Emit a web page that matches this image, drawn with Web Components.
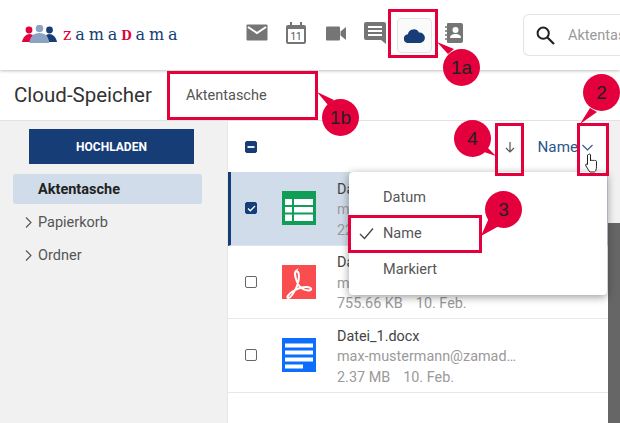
<!DOCTYPE html>
<html lang="de"><head><meta charset="utf-8"><title>Cloud-Speicher</title>
<style>html,body{margin:0;padding:0;width:620px;height:423px;overflow:hidden;background:#fff;font-family:Roboto,"Liberation Sans",sans-serif}</style>
</head><body>
<zd-app></zd-app>
<script>
const def=(name,css,html)=>customElements.define(name,class extends HTMLElement{
  constructor(){super();const r=this.attachShadow({mode:'open'});r.innerHTML=`<style>${css}</style>${typeof html==='function'?html(this):html}`;}
});
const ICONS={
 mail:'<svg width="22" height="18" viewBox="0 0 22 18"><rect x="0.5" y="0.5" width="21" height="16" rx="1" fill="#757575"/><path d="M2 3l9 6 9-6" fill="none" stroke="#fff" stroke-width="2"/></svg>',
 cal:'<svg width="20" height="22" viewBox="0 0 20 22"><path d="M4 0h2v3h8V0h2v3h2a2 2 0 0 1 2 2v15a2 2 0 0 1-2 2H2a2 2 0 0 1-2-2V5a2 2 0 0 1 2-2h2z" fill="#757575"/><rect x="2" y="7" width="16" height="13" fill="#fff"/><text x="10" y="18" text-anchor="middle" font-family="Roboto,sans-serif" font-size="10" fill="#555">11</text></svg>',
 video:'<svg width="20" height="15" viewBox="0 0 20 15"><rect x="0" y="0.5" width="14" height="14" rx="1" fill="#757575"/><path d="M14.500 5.500L20 1v13l-5.500-4.500z" fill="#757575"/></svg>',
 chat:'<svg width="22" height="22" viewBox="0 0 22 22"><path d="M2 0h18a2 2 0 0 1 2 2v20l-5-4H2a2 2 0 0 1-2-2V2a2 2 0 0 1 2-2z" fill="#757575"/><path d="M4 5h14M4 9h14M4 13h14" stroke="#fff" stroke-width="2"/></svg>',
 cloud:'<svg width="21" height="15" viewBox="0 0 21 15"><path d="M4.500 15a4.400 4.400 0 0 1-.7-8.800A6 6 0 0 1 15 4.600a5.200 5.200 0 0 1 1.300 10.400z" fill="#163d76"/></svg>',
 book:'<svg width="18" height="20" viewBox="0 0 18 20"><path d="M3 0h13a2 2 0 0 1 2 2v16a2 2 0 0 1-2 2H3a1 1 0 0 1-1-1V1a1 1 0 0 1 1-1z" fill="#757575"/><path d="M0 4h4M0 8h4M0 12h4M0 16h4" stroke="#757575" stroke-width="1.500"/><circle cx="10.500" cy="7" r="3" fill="#fff"/><path d="M5 15c0-3 2.500-4 5.500-4s5.500 1 5.500 4z" fill="#fff"/></svg>',
 search:'<svg width="19" height="19" viewBox="0 0 19 19"><circle cx="7.200" cy="7.200" r="5.600" fill="none" stroke="#222" stroke-width="2"/><path d="M11.500 11.500L18 18" stroke="#222" stroke-width="2.200"/></svg>',
 sheet:'<svg width="34" height="34" viewBox="0 0 34 34"><rect width="34" height="34" fill="#0f9d58"/><rect x="3" y="8" width="28" height="22" fill="#fff"/><path d="M3 15h28M3 22.500h28" stroke="#0f9d58" stroke-width="2"/><path d="M11 8v22" stroke="#0f9d58" stroke-width="2"/></svg>',
 pdf:'<svg width="34" height="34" viewBox="0 0 34 34"><rect width="34" height="34" fill="#f94d4f"/><path d="M14 6c-1.500 1-1 6 1 11s6 8 11 8.500c3 .3 4-1.500 2.500-2.500-3-2-11-1-18 3.500-5 3.500-6 6-4.500 6.500 2 .5 6-4.500 9-12 1.500-4 2.500-9 1.500-13-.4-1.600-2-2-3-1z" fill="none" stroke="#fff" stroke-width="2"/></svg>',
 doc:'<svg width="34" height="34" viewBox="0 0 34 34"><rect width="34" height="34" fill="#0d6efd"/><path d="M3 7.500h28M3 14.500h28M3 21.500h28" stroke="#fff" stroke-width="4"/><path d="M3 28.500h18" stroke="#fff" stroke-width="4"/></svg>',
 chev:'<svg width="7" height="11" viewBox="0 0 7 11"><path d="M1 .5l5 5-5 5" fill="none" stroke="#555" stroke-width="1.100"/></svg>',
};
def('zd-icon',':host{display:inline-flex;align-items:center;justify-content:center;line-height:0}',h=>ICONS[h.getAttribute('name')]);
def('zd-logo',`:host{display:flex;align-items:center;gap:6px;width:215px;flex:none}
 span{font:16px "DejaVu Serif",serif;letter-spacing:3.900px;color:#163d76;line-height:1}i{font-style:normal;color:#e4003c}b{font-weight:700;color:#e4003c;font-size:12px}`,
 `<svg width="35" height="20" viewBox="0 0 35 20"><circle cx="7" cy="5" r="3.400" fill="#e4003c"/><circle cx="27.500" cy="5" r="3.400" fill="#163d76"/><path d="M0 17c1-5 4-8 8-8l3 1-3 7z" fill="#e4003c"/><path d="M35 17c-1-5-4-8-8-8l-3 1 3 7z" fill="#163d76"/><circle cx="17.500" cy="3.500" r="3.800" fill="#8da3c4"/><path d="M7.500 18c0-6 4-10 10-10s9.500 4 9.500 10z" fill="#8da3c4"/></svg><span><i>z</i>ama<b>D</b>ama</span>`);
def('zd-nav',`:host{display:flex;flex:none;width:286px;align-items:center}
 ::slotted(*){width:39.500px;height:34px;flex:none}`,'<slot></slot>');
def('zd-navitem',`:host{display:flex;align-items:center;justify-content:center}
 :host([on]) div{border:1px solid #e3e3e3;background:#fafafa;border-radius:4px;width:33px;height:33px;display:flex;align-items:center;justify-content:center}`,'<div><slot></slot></div>');
def('zd-search',`:host{display:flex;align-items:center;flex:none;width:140px;height:42px;box-sizing:border-box;border:1px solid #e4e4e4;border-right:0;border-radius:6px 0 0 6px;padding-left:12px;gap:13px;color:#9a9a9a;font-size:14.500px;overflow:hidden;white-space:nowrap}`,'<zd-icon name="search"></zd-icon><span>Aktentasche</span>');
def('zd-header',`:host{display:flex;align-items:center;height:70px;padding-left:22px;box-sizing:border-box;background:#fff;position:relative;z-index:2;box-shadow:0 1px 3px rgba(0,0,0,.25)}`,'<slot></slot>');
def('zd-subhead',`:host{display:flex;align-items:center;height:51px;box-sizing:border-box;border-bottom:1px solid #e2e2e2;background:#fff;color:#3a3a3a;white-space:nowrap}
 h1{font:400 20.500px Roboto,sans-serif;color:#333;margin:0 0 0 14px;width:172px;flex:none}
 span{font-size:14.500px;color:#555;padding-top:1px}`,'<h1>Cloud-Speicher</h1><span>Aktentasche</span>');
def('zd-sidebar',`:host{display:flex;flex-direction:column;width:228px;flex:none;box-sizing:border-box;background:#f1f1f1;border-right:1px solid #e6e6e6;padding:8px 25px 0 13px;font-size:14.500px;color:#555}
 button{all:unset;display:flex;align-items:center;justify-content:center;box-sizing:border-box;margin-left:16px;width:165px;height:35px;background:#163d76;color:#fff;font:700 12px Roboto,sans-serif}
 .a{margin-top:10px;height:30px;background:#d1dcea;border-radius:2px;display:flex;align-items:center;padding-left:25px;font-weight:700;color:#222}
 .i{display:flex;align-items:center;height:33px;padding-left:12px;gap:6px}
 .a + .i{margin-top:2px}`,
 `<button>HOCHLADEN</button><div class="a">Aktentasche</div><div class="i"><zd-icon name="chev"></zd-icon>Papierkorb</div><div class="i"><zd-icon name="chev"></zd-icon>Ordner</div>`);
def('zd-check',`:host{display:inline-flex;width:12px;height:12px;box-sizing:border-box;border-radius:2px;border:1.500px solid #666;flex:none;align-items:center;justify-content:center;background:#fff}
 :host([state]){background:#163d76;border-color:#163d76}`,h=>{const s=h.getAttribute('state');
 return s==='on'?'<svg width="9" height="9" viewBox="0 0 9 9"><path d="M1 4.500l2.300 2.300L8 2" fill="none" stroke="#fff" stroke-width="1.300"/></svg>':s==='mixed'?'<svg width="8" height="8" viewBox="0 0 8 8"><path d="M0.500 4h7" stroke="#fff" stroke-width="1.800"/></svg>':''});
def('zd-toolbar',`:host{display:flex;align-items:center;height:51px;flex:none;padding-left:17px;box-sizing:border-box;font-size:15.200px;color:#2a5590}
 .s{flex:1}.ar{margin-right:22px;line-height:0}.n{margin-right:4px}.c{margin-right:15px;line-height:0;padding-top:2px}`,
 `<zd-check state="mixed"></zd-check><div class="s"></div><div class="ar"><svg width="12" height="12" viewBox="0 0 12 12"><path d="M6 1v10M2 7l4 4 4-4" fill="none" stroke="#555" stroke-width="1.200"/></svg></div><span class="n">Name</span><div class="c"><svg width="11" height="7" viewBox="0 0 11 7"><path d="M.5 1l5 5 5-5" fill="none" stroke="#2a5590" stroke-width="1.100"/></svg></div>`);
def('zd-row',`:host{display:flex;align-items:center;height:73.500px;box-sizing:border-box;border-bottom:1.500px solid #e8e8e8;padding-left:17px;flex:none;background:#fff}
 :host([sel]){background:#d1dcea;border-left:3px solid #163d76;padding-left:14px;border-bottom-color:#dfe5ee}
 .ic{margin-left:25px;margin-right:21px;line-height:0}
 .t{display:flex;flex-direction:column;gap:2px;padding-top:4px;font-size:14.400px;line-height:18.500px;color:#9a9a9a;white-space:nowrap}
 .t b{font-weight:400;color:#444}
 .m{display:flex;gap:13px}`,h=>{
 const g=a=>h.getAttribute(a)||'';
 return `<zd-check ${g('state')?`state="${g('state')}"`:''}></zd-check><div class="ic"><zd-icon name="${g('icon')}"></zd-icon></div><div class="t"><b>${g('title')}</b><span>max-mustermann@zamad…</span><div class="m"><span>${g('size')}</span><span>10. Feb.</span></div></div>`});
def('zd-scroll',`:host{display:block;width:12px;flex:none;background:#f1f1f1;overflow:hidden}
 div{margin-top:102px;height:300px;background:#666}`,'<div></div>');
def('zd-menu',`:host{position:absolute;left:349px;top:172px;z-index:3;width:258px;height:123px;box-sizing:border-box;padding:7px 0;background:#fff;border-radius:4px;box-shadow:0 2px 9px rgba(0,0,0,.4);font-size:14.500px;color:#555}
 div{display:flex;align-items:center;height:36px;padding-left:34px;position:relative}
 svg{position:absolute;left:10px;top:12px}`,
 `<div>Datum</div><div><svg width="16" height="13" viewBox="0 0 16 13"><path d="M1 7l4.500 4.500L14 1.500" fill="none" stroke="#444" stroke-width="1.300"/></svg>Name</div><div>Markiert</div>`);
def('zd-mark',`:host{position:absolute;z-index:5;box-sizing:border-box;border:3px solid #e4003c}`,'');
def('zd-bubble',`:host{position:absolute;z-index:6;width:37px;height:37px;border-radius:50%;background:#e4003c;color:#222;font:400 19px/37px "Liberation Sans",Arial,sans-serif;text-align:center}`,'<slot></slot>');
def('zd-app',`:host{display:block;position:relative;width:620px;height:423px;overflow:hidden;background:#fff}
 .body{display:flex;height:302px}
 .main{flex:1;display:flex;flex-direction:column;min-width:0;overflow:hidden}
 .tails{position:absolute;left:0;top:0;z-index:5;pointer-events:none}
 .hand{position:absolute;z-index:7;left:585px;top:153px;line-height:0}
 zd-mark.m1a{left:388px;top:9px;width:50px;height:49px}
 zd-mark.m1b{left:167px;top:71px;width:151px;height:49px}
 zd-mark.m2{left:577px;top:123px;width:32px;height:53px}
 zd-mark.m3{left:348px;top:215px;width:134px;height:38px}
 zd-mark.m4{left:495px;top:123px;width:29px;height:53px}
 zd-bubble.b1a{left:443px;top:49px}zd-bubble.b1b{left:322px;top:99px}zd-bubble.b2{left:583px;top:74px}zd-bubble.b3{left:485px;top:191px}zd-bubble.b4{left:454px;top:120px}`,
 `<zd-header><zd-logo></zd-logo><zd-nav><zd-navitem><zd-icon name="mail"></zd-icon></zd-navitem><zd-navitem><zd-icon name="cal"></zd-icon></zd-navitem><zd-navitem><zd-icon name="video"></zd-icon></zd-navitem><zd-navitem><zd-icon name="chat"></zd-icon></zd-navitem><zd-navitem on><zd-icon name="cloud"></zd-icon></zd-navitem><zd-navitem><zd-icon name="book"></zd-icon></zd-navitem></zd-nav><zd-search></zd-search></zd-header>
 <zd-subhead></zd-subhead>
 <div class="body"><zd-sidebar></zd-sidebar><div class="main"><zd-toolbar></zd-toolbar>
 <zd-row sel state="on" icon="sheet" title="Datei_3.xlsx" size="22.10 KB"></zd-row>
 <zd-row icon="pdf" title="Datei_2.pdf" size="755.66 KB"></zd-row>
 <zd-row icon="doc" title="Datei_1.docx" size="2.37 MB"></zd-row>
 </div><zd-scroll></zd-scroll></div>
 <zd-menu></zd-menu>
 <svg class="tails" width="620" height="423"><path d="M437 42l11 12 6-5zM317 92l11 13 6-5zM580 124l10-16 7 4zM496 156l-18-6 6-6zM481 236l8-18 10 8z" fill="#e4003c"/></svg>
 <zd-mark class="m1a"></zd-mark><zd-mark class="m1b"></zd-mark><zd-mark class="m2"></zd-mark><zd-mark class="m3"></zd-mark><zd-mark class="m4"></zd-mark>
 <zd-bubble class="b1a">1a</zd-bubble><zd-bubble class="b1b">1b</zd-bubble><zd-bubble class="b2">2</zd-bubble><zd-bubble class="b3">3</zd-bubble><zd-bubble class="b4">4</zd-bubble>
 <div class="hand"><svg width="13" height="20" viewBox="0 0 13 20"><path d="M3.500 1.500c1-1 2-.5 2 .5v6c0-1 2-1 2 0 0-1 2-1 2 0 .3-.8 2-.7 2 .5v5c0 3-1 5-2 5.500H5c-1-1-2-3-4-6-1-1.500 0-2.500 1.500-1.500V2z" fill="#fff" stroke="#222" stroke-width="1"/></svg></div>`);
</script>
</body></html>
